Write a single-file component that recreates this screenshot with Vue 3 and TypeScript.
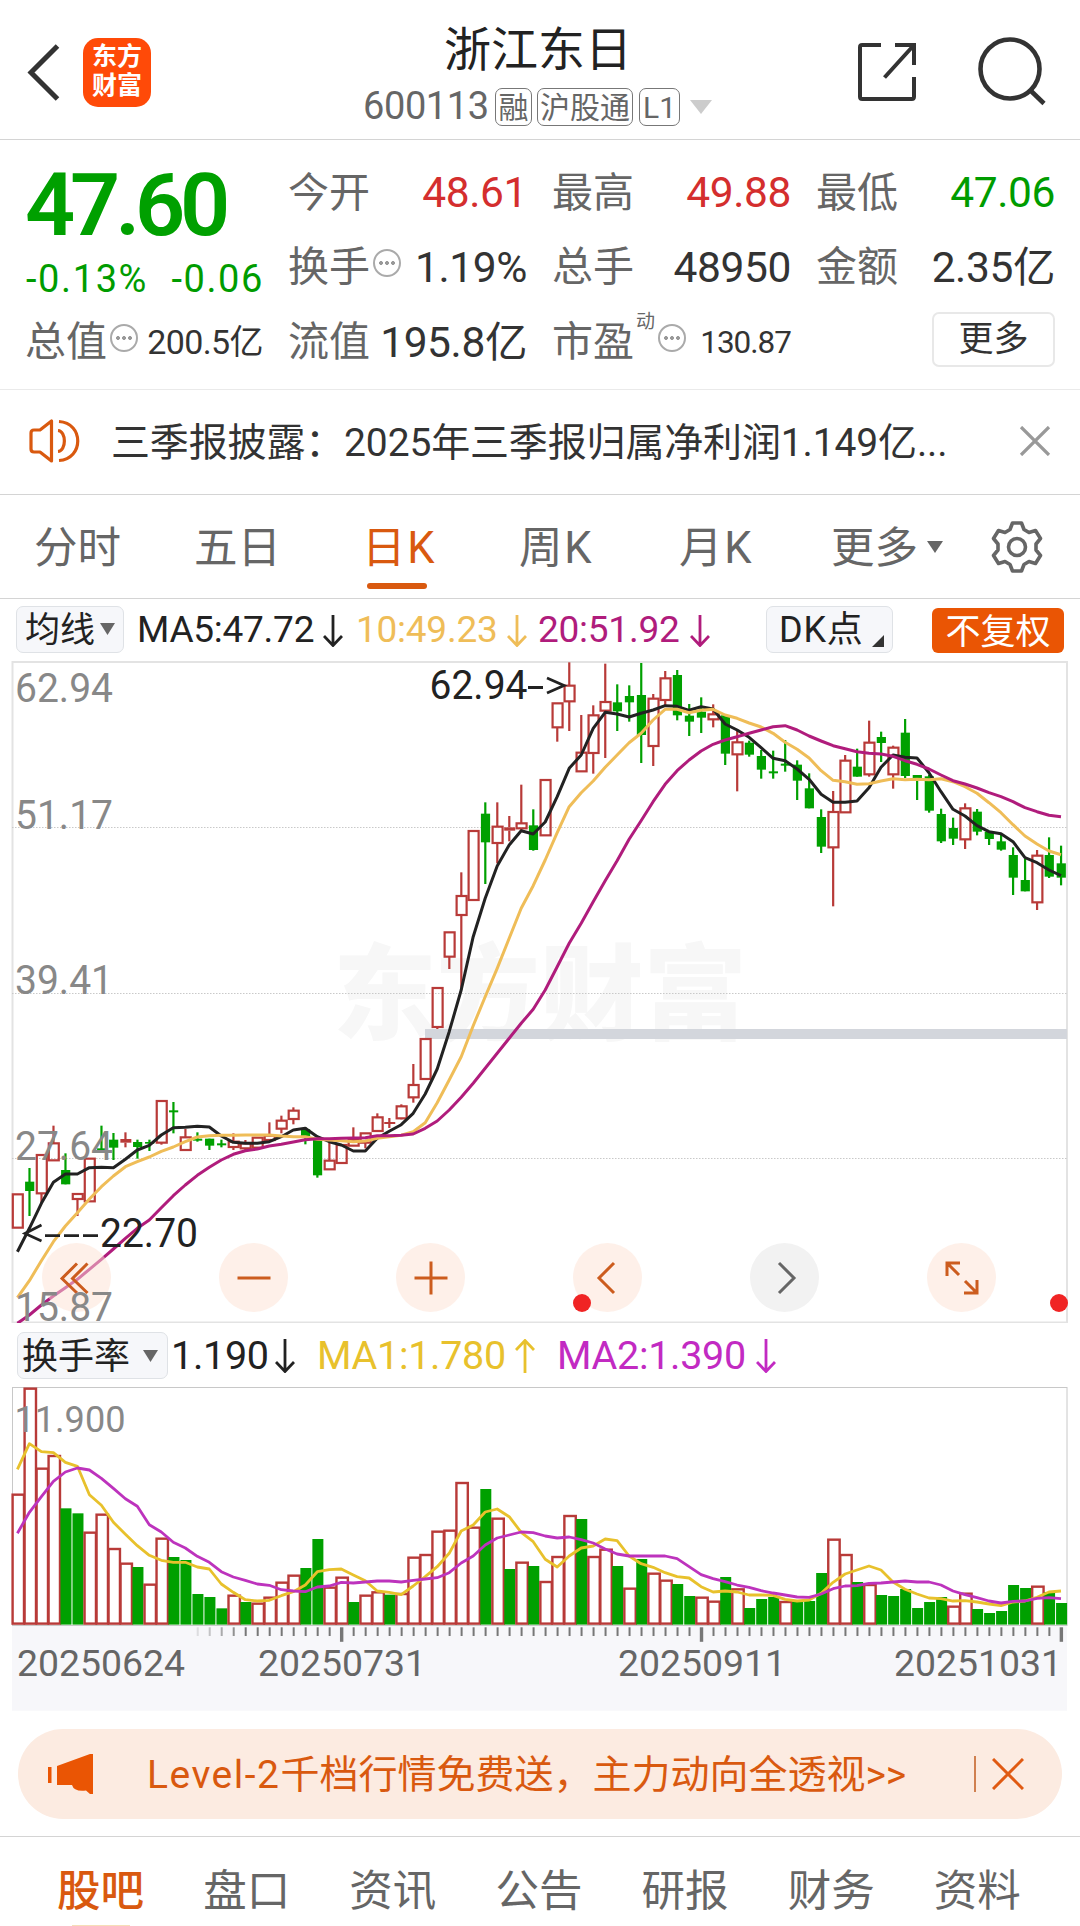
<script setup lang="ts">
type Candle = [kind: 'r' | 'g', top: number, bottom: number, high: number, low: number]

const STEP = 11.995
const X0 = 17.4
const cx = (i: number): number => X0 + i * STEP

// Candles are kept in thirds of a pixel below the pane-specific origin.
const raw: { origin: number; rows: Candle[] }[] = [
  {
    origin: 990,
    rows: [
      ['r', 613, 713, 613, 713], ['g', 575, 603, 534, 678], ['r', 495, 610, 495, 640], ['r', 460, 511, 407, 511],
      ['g', 540, 583, 490, 583], ['r', 612, 627, 612, 678], ['r', 506, 634, 506, 634], ['g', 475, 483, 407, 483],
      ['g', 449, 473, 429, 510], ['r', 447, 458, 427, 472], ['g', 456, 471, 449, 506], ['g', 456, 461, 449, 483],
      ['r', 333, 458, 333, 464], ['g', 361, 367, 336, 430], ['r', 442, 480, 417, 480], ['g', 446, 452, 427, 455],
      ['g', 446, 467, 446, 480], ['g', 460, 466, 449, 472], ['r', 455, 471, 430, 480], ['r', 460, 475, 450, 480],
      ['r', 443, 473, 443, 473], ['r', 437, 450, 397, 450], ['r', 392, 416, 377, 430], ['r', 362, 387, 352, 403],
      ['g', 418, 438, 412, 463], ['g', 450, 556, 445, 563], ['r', 512, 538, 455, 538], ['r', 465, 519, 465, 519],
      ['r', 450, 467, 412, 467], ['r', 430, 458, 430, 475], ['r', 382, 423, 370, 426], ['r', 396, 402, 384, 414],
      ['r', 349, 385, 343, 388], ['r', 285, 322, 222, 338], ['r', 147, 267, 147, 267],
    ],
  },
  {
    origin: 650,
    rows: [
      ['r', 1014, 1131, 1014, 1137], ['r', 847, 920, 847, 957], ['r', 738, 795, 667, 1020], ['r', 543, 750, 543, 750],
      ['g', 491, 577, 457, 702], ['r', 530, 579, 457, 640], ['r', 532, 542, 498, 574], ['r', 520, 535, 404, 540],
      ['g', 526, 600, 478, 602], ['r', 390, 556, 390, 556], ['r', 160, 232, 160, 275], ['r', 107, 154, 37, 243],
      ['r', 308, 364, 195, 366], ['r', 196, 309, 166, 371], ['r', 156, 182, 41, 324], ['g', 157, 184, 103, 243],
      ['g', 138, 157, 106, 215], ['g', 135, 255, 39, 339], ['r', 146, 288, 132, 348], ['r', 85, 150, 63, 165],
      ['g', 75, 196, 60, 211], ['g', 197, 215, 162, 258], ['g', 185, 203, 142, 249], ['r', 193, 208, 163, 232],
      ['g', 196, 311, 196, 345], ['r', 277, 313, 243, 424], ['g', 278, 314, 272, 320], ['g', 318, 359, 300, 386],
      ['g', 364, 370, 302, 386], ['g', 341, 347, 270, 365], ['g', 344, 392, 331, 450], ['g', 415, 475, 370, 475],
      ['g', 501, 590, 478, 609], ['r', 486, 592, 423, 769], ['r', 332, 487, 315, 487], ['g', 350, 380, 296, 380],
      ['r', 278, 373, 212, 380], ['g', 261, 279, 245, 336], ['r', 293, 373, 287, 416], ['g', 248, 378, 207, 384],
      ['g', 375, 384, 375, 450], ['g', 379, 482, 374, 488], ['g', 492, 574, 476, 579], ['g', 534, 566, 503, 585],
      ['r', 475, 568, 460, 597], ['g', 485, 545, 477, 556], ['g', 545, 567, 545, 585], ['g', 574, 599, 555, 602],
      ['g', 615, 683, 592, 735], ['g', 690, 724, 627, 724], ['r', 617, 757, 600, 780], ['g', 615, 680, 562, 684],
      ['g', 640, 683, 587, 706],
    ],
  },
]

const candles = raw
  .flatMap(({ origin, rows }) =>
    rows.map(([kind, t, b, h, l]) => ({
      kind,
      top: origin + t / 3,
      bottom: origin + b / 3,
      high: origin + h / 3,
      low: origin + l / 3,
    })),
  )
  .map((c, i) => ({ ...c, x: cx(i) }))

const points = (ys: number[], start = 0): string[] => ys.map((y, i) => `${cx(start + i).toFixed(1)},${y.toFixed(1)}`)
const line = (lower: number[], upper: number[]): string =>
  [...points(lower.map((v) => 990 + v / 3)), ...points(upper.map((v) => 650 + v / 3), lower.length)].join(' ')

const ma5 = line(
  [785, 715, 640, 577, 552, 552, 533, 532, 533, 508, 480, 466, 435, 413, 412, 409, 411, 438, 457, 460, 460, 455, 440, 420, 415, 440, 455, 465, 483, 483, 445, 424, 404, 370, 312, 237, 125],
  [1020, 860, 745, 648, 585, 542, 552, 516, 440, 355, 315, 235, 187, 192, 201, 190, 180, 167, 169, 181, 170, 177, 222, 240, 262, 293, 325, 332, 357, 388, 433, 457, 457, 453, 413, 352, 315, 322, 324, 368, 425, 478, 498, 527, 545, 551, 575, 623, 638, 660, 677],
)
const ma10 = line(
  [923, 872, 812, 755, 708, 668, 627, 590, 558, 530, 515, 501, 484, 471, 455, 441, 437, 436, 436, 435, 435, 435, 438, 440, 440, 448, 450, 452, 455, 453, 445, 440, 436, 425, 398, 338, 270, 200, 107, 20],
  [955, 865, 775, 707, 630, 548, 470, 428, 393, 352, 315, 278, 250, 210, 178, 178, 188, 181, 178, 195, 205, 219, 231, 250, 277, 298, 324, 362, 391, 395, 403, 401, 393, 386, 389, 388, 389, 386, 395, 410, 430, 458, 488, 524, 558, 582, 603, 614],
)
const ma20 = line(
  [1000, 975, 945, 918, 893, 868, 838, 808, 777, 745, 715, 690, 653, 617, 585, 556, 532, 510, 493, 482, 477, 468, 463, 456, 449, 446, 446, 445, 444, 443, 437, 437, 436, 432, 415, 393, 360, 322, 280, 235, 190, 145, 100, 58],
  [1020, 950, 880, 820, 755, 692, 632, 568, 512, 455, 403, 362, 330, 303, 283, 270, 260, 250, 240, 230, 227, 240, 258, 273, 287, 296, 305, 310, 312, 319, 332, 343, 357, 375, 392, 402, 414, 428, 440, 455, 473, 485, 496, 500],
)

const vy = (v: number): number => 1320 + v / 3
const volumeTops = [
  521, 203, 443, 405, 565, 580, 635, 581, 684, 728, 741, 791, 653, 711, 720, 822, 831, 865, 824, 846, 848, 830, 785, 764, 744, 657, 800, 770, 846, 824, 814, 824, 819, 710, 702, 632, 629, 486, 620, 507, 593, 747, 725, 738,
  783, 708, 585, 597, 708, 686, 738, 803, 717, 758, 779, 792, 828, 830, 842, 771, 805, 864, 837, 831, 843, 846, 843, 759, 656, 702, 786, 792, 825, 828, 807, 864, 846, 831, 857, 818, 867, 879, 873, 795, 804, 797, 816, 849,
]
const volumeKinds = 'rrrrggrrrrgrrgggggrgrrrrggrrgrrgrrrrrrrgrgrgrrrgrrgrgrrggrrgrgggrgggrrgrggggggrrgggggrgg'
const bars = volumeTops.map((v, i) => ({ kind: volumeKinds[i], x: cx(i) + 0.4, y: vy(v) }))
const BASE = 1624.6

const va = points(
  [
    448, 371, 395, 398, 427, 439, 524, 556, 607, 643, 677, 706, 721, 727, 727, 741, 747, 792, 817, 839, 843, 841, 827, 815, 795, 755, 749, 747, 765, 782, 813, 817, 824, 798, 770, 740, 700, 633, 615, 576, 567, 590, 637, 665,
    718, 741, 708, 684, 678, 657, 662, 708, 731, 742, 758, 770, 774, 800, 816, 813, 816, 825, 825, 826, 838, 843, 840, 820, 787, 762, 750, 738, 750, 786, 808, 822, 834, 836, 843, 842, 846, 852, 857, 846, 843, 832, 816, 813,
  ].map(vy),
).join(' ')
const vb = points(
  [
    640, 577, 530, 484, 456, 444, 450, 475, 505, 536, 559, 614, 636, 667, 684, 709, 727, 755, 771, 781, 792, 796, 809, 813, 815, 801, 798, 787, 789, 786, 783, 783, 786, 781, 777, 773, 758, 729, 708, 675, 654, 645, 636, 638,
    648, 654, 651, 659, 669, 687, 702, 708, 708, 708, 708, 716, 740, 764, 776, 785, 795, 802, 812, 819, 825, 831, 832, 822, 806, 798, 797, 790, 789, 786, 783, 786, 786, 795, 813, 824, 833, 843, 849, 844, 843, 835, 833, 836,
  ].map(vy),
).join(' ')

const ticks = Array.from({ length: 73 }, (_, k) => k + 15).map((i) => ({
  x: cx(i) + 0.4,
  major: i === 27 || i === 57 || i === 87,
  fade: i < 19 ? (i - 14) / 5 : 1,
}))
const dates = [
  { t: '20250624', x: 17, w: 168 },
  { t: '20250731', x: 258, w: 168 },
  { t: '20250911', x: 618, w: 168 },
  { t: '20251031', x: 894, w: 168 },
]
const priceLabels = [
  { t: '62.94', y: 701.5 },
  { t: '51.17', y: 829.3 },
  { t: '39.41', y: 994.3 },
  { t: '27.64', y: 1159.8 },
  { t: '15.87', y: 1321 },
]
const periods = [
  { t: '分时', w: 87, l: 34 },
  { t: '五日', w: 87, l: 73 },
  { t: '日K', w: 71, l: 81 },
  { t: '周K', w: 74, l: 86 },
  { t: '月K', w: 74, l: 86 },
  { t: '更多', w: 87, l: 78 },
]
const footTabs = ['股吧', '盘口', '资讯', '公告', '研报', '财务', '资料']
</script>

<template>
  <div class="page">
    <header class="top">
      <svg class="back" width="34" height="58" viewBox="0 0 34 58"><path d="M31.500 3 5 29.500 31.500 56" fill="none" stroke="#333" stroke-width="5" /></svg>
      <div class="logo"><span>东方</span><span>财富</span></div>
      <div class="heading">
        <h1>浙江东日</h1>
        <div class="code">
          <span class="num">600113</span>
          <span class="tag t1">融</span><span class="tag t2">沪股通</span><span class="tag t3">L1</span>
          <svg width="22" height="14" viewBox="0 0 22 14"><path d="M0 0H22L11 14Z" fill="#ccc" /></svg>
        </div>
      </div>
      <svg class="share" width="60" height="60" viewBox="0 0 60 60" fill="none" stroke="#333" stroke-width="4">
        <path d="M24 3H5.200Q3 3 3 5.200V54.800Q3 57 5.200 57H54.800Q57 57 57 54.800V35M38 3H57V23M57 3 27.500 35.500" />
      </svg>
      <svg class="search" width="70" height="70" viewBox="0 0 70 70" fill="none" stroke="#333" stroke-width="4.600">
        <circle cx="33" cy="33" r="29.500" /><path d="M53 54 67 67.500" />
      </svg>
    </header>

    <section class="quote">
      <div class="price">47.60</div>
      <div class="cell first"><label>今开</label><b class="red">48.61</b></div>
      <div class="cell first"><label>最高</label><b class="red">49.88</b></div>
      <div class="cell first"><label>最低</label><b class="green">47.06</b></div>
      <div class="change"><span>-0.13%</span><span>-0.06</span></div>
      <div class="cell"><label>换手</label><i class="dots"></i><b>1.19%</b></div>
      <div class="cell"><label>总手</label><b>48950</b></div>
      <div class="cell"><label>金额</label><b>2.35亿</b></div>
      <div class="cell"><label>总值</label><i class="dots"></i><b class="mid">200.5亿</b></div>
      <div class="cell"><label>流值</label><b>195.8亿</b></div>
      <div class="cell"><label>市盈</label><sup>动</sup><i class="dots"></i><b class="small">130.87</b></div>
      <div class="cell last"><button class="more">更多</button></div>
    </section>

    <section class="notice">
      <svg width="52" height="46" viewBox="0 0 52 46" fill="none" stroke="#d9590f" stroke-width="3.200" stroke-linejoin="round">
        <path d="M22.500 3V43L11 34H5Q2 34 2 31V15Q2 12 5 12H11Z" />
        <path d="M29 12.500C37.500 13 37.500 33 29 33.500M30 3.500C55 5 55 41 30 42.500" />
      </svg>
      <p>三季报披露：2025年三季报归属净利润1.149亿...</p>
      <svg width="32" height="30" viewBox="0 0 32 30"><path d="M2 1 30 29M30 1 2 29" stroke="#999" stroke-width="3.200" /></svg>
    </section>

    <nav class="periods">
      <span v-for="p in periods" :key="p.t" :class="{ on: p.t === '日K', k: p.t.endsWith('K') }" :style="{ width: p.w + 'px', marginLeft: p.l + 'px' }">{{ p.t }}</span>
      <svg class="caret" width="16" height="12" viewBox="0 0 16 12"><path d="M0 0H16L8 12Z" fill="#666" /></svg>
      <svg class="gear" width="56" height="56" viewBox="-28 -28 56 56" fill="none" stroke="#666" stroke-width="3.600" stroke-linejoin="round">
        <path d="M-4.500 -24H4.500L7 -17.500 12 -14.500 18.500 -16.500 23.500 -8.500 19 -3V3L23.500 8.500 18.500 16.500 12 14.500 7 17.500 4.500 24H-4.500L-7 17.500 -12 14.500 -18.500 16.500 -23.500 8.500 -19 3V-3L-23.500 -8.500 -18.500 -16.500 -12 -14.500 -7 -17.500Z" />
        <circle r="8.500" />
      </svg>
    </nav>

    <section class="averages">
      <button class="chip ma">均线<svg width="15" height="12" viewBox="0 0 15 12"><path d="M0 0H15L7.500 12Z" fill="#666" /></svg></button>
      <span class="k5">MA5:47.72</span><svg class="arr a1" viewBox="0 0 20 32"><path d="M10 0V30M1 21 10 30.500 19 21" /></svg>
      <span class="k10">10:49.23</span><svg class="arr a2" viewBox="0 0 20 32"><path d="M10 0V30M1 21 10 30.500 19 21" /></svg>
      <span class="k20">20:51.92</span><svg class="arr a3" viewBox="0 0 20 32"><path d="M10 0V30M1 21 10 30.500 19 21" /></svg>
      <button class="chip dk">DK点<svg width="12" height="12" viewBox="0 0 12 12"><path d="M12 0V12H0Z" fill="#333" /></svg></button>
      <button class="adjust">不复权</button>
    </section>

    <section class="kline">
      <svg class="plot" width="1080" height="664" viewBox="0 659 1080 664">
        <rect x="12.500" y="662" width="1054.500" height="660.500" fill="none" stroke="#e3e3e3" stroke-width="2" />
        <text class="mark" x="333" y="1032" textLength="414" lengthAdjust="spacingAndGlyphs">东方财富</text>
        <g stroke="#c9c9c9" stroke-width="1" stroke-dasharray="1.500 1.500">
          <path d="M12 827.500H1067M12 993.500H1067M12 1158.500H1067" />
        </g>
        <rect x="425" y="1029" width="642" height="10" fill="#d3d6dc" />
        <g v-for="(c, i) in candles" :key="i">
          <template v-if="c.kind === 'g'">
            <rect :x="c.x - 1" :y="c.high" width="2.200" :height="c.low - c.high" fill="#00a000" />
            <rect :x="c.x - 4.300" :y="c.top" width="9.200" :height="c.bottom - c.top" fill="#00a000" />
          </template>
          <template v-else>
            <rect :x="c.x - 1" :y="c.high" width="2.200" :height="Math.max(0, c.top - c.high)" fill="#b83a38" />
            <rect :x="c.x - 1" :y="c.bottom" width="2.200" :height="Math.max(0, c.low - c.bottom)" fill="#b83a38" />
            <rect v-if="c.bottom - c.top < 4" :x="c.x - 5" :y="c.top" width="11" :height="c.bottom - c.top" fill="#b83a38" />
            <rect v-else :x="c.x - 4.600" :y="c.top" width="10" :height="c.bottom - c.top" fill="none" stroke="#b83a38" stroke-width="2.200" />
          </template>
        </g>
        <g fill="none" stroke-width="3" stroke-linejoin="round">
          <polyline :points="ma5" stroke="#222" />
          <polyline :points="ma10" stroke="#efbd58" />
          <polyline :points="ma20" stroke="#b01c7c" />
        </g>
        <text class="peak" x="429.500" y="699.300" textLength="98" lengthAdjust="spacingAndGlyphs">62.94</text>
        <text class="peak" x="100" y="1247" textLength="98" lengthAdjust="spacingAndGlyphs">22.70</text>
        <g fill="none" stroke="#222" stroke-width="2.800">
          <path d="M528 687.500H543M547 678 564 685.500 547 693" />
          <path d="M41.500 1225 25 1233.500 41.500 1241M45 1235.700H60M64 1235.700H79M83 1235.700H98" />
        </g>
      </svg>
      <div class="tools">
        <button><svg viewBox="-30 -30 60 60"><path d="M0 -14.500 -15 .500 0 15M10.500 -14.500 -4.500 .500 10.500 15" /></svg></button>
        <button><svg viewBox="-30 -30 60 60"><path d="M-16.500 0H16.500" /></svg></button>
        <button><svg viewBox="-30 -30 60 60"><path d="M-16.500 0H16.500M0 -16.500V16.500" /></svg></button>
        <button><svg viewBox="-30 -30 60 60"><path d="M6 -15 -9 0 6 15" /></svg><em></em></button>
        <button class="off"><svg viewBox="-30 -30 60 60"><path d="M-6 -15 9 0 -6 15" /></svg></button>
        <button><svg viewBox="-30 -30 60 60"><path d="M-2 -15H-15V-2M-14 -14 -3 -3M2 15H15V2M14 14 3 3" /></svg></button>
      </div>
      <svg class="labels" width="130" height="680" viewBox="0 659 130 680">
        <text v-for="l in priceLabels" :key="l.t" class="scale" x="15" :y="l.y" textLength="98" lengthAdjust="spacingAndGlyphs">{{ l.t }}</text>
      </svg>
      <em class="edge"></em>
    </section>

    <section class="turnover">
      <button class="chip hs">换手率<svg width="15" height="12" viewBox="0 0 15 12"><path d="M0 0H15L7.500 12Z" fill="#666" /></svg></button>
      <span class="v0">1.190</span><svg class="arr b1" viewBox="0 0 20 34"><path d="M10 0V32M1 23 10 32.500 19 23" /></svg>
      <span class="v1">MA1:1.780</span><svg class="arr b2" viewBox="0 0 20 34"><path d="M10 34V2M1 11 10 1.500 19 11" /></svg>
      <span class="v2">MA2:1.390</span><svg class="arr b3" viewBox="0 0 20 34"><path d="M10 0V32M1 23 10 32.500 19 23" /></svg>
    </section>

    <svg class="volume" width="1080" height="327" viewBox="0 1384 1080 327">
      <rect x="12" y="1626" width="1055" height="84.700" fill="#f7f7fa" />
      <rect x="12.500" y="1387.500" width="1054.500" height="238" fill="none" stroke="#c8c8c8" stroke-width="1" />
      <g v-for="(b, i) in bars" :key="i">
        <rect v-if="b.kind === 'g'" :x="b.x - 5.300" :y="b.y" width="11" :height="BASE - b.y" fill="#00a000" />
        <rect v-else :x="b.x - 5.200" :y="b.y + 1" width="11.400" :height="BASE - b.y - 2" fill="#fff" stroke="#b83a38" stroke-width="2.400" />
      </g>
      <g fill="none" stroke-width="2.800" stroke-linejoin="round">
        <polyline :points="va" stroke="#e8c12c" />
        <polyline :points="vb" stroke="#bd33bd" />
      </g>
      <text class="scale vmax" x="14.500" y="1432" textLength="111" lengthAdjust="spacingAndGlyphs">11.900</text>
      <rect v-for="t in ticks" :key="t.x" :x="t.x - (t.major ? 1.700 : 1)" y="1627.300" :width="t.major ? 3.400 : 2" :height="t.major ? 14.500 : 8.700" fill="#777" :opacity="t.fade" />
      <text v-for="d in dates" :key="d.t" class="date" :x="d.x" y="1676" :textLength="d.w" lengthAdjust="spacingAndGlyphs">{{ d.t }}</text>
    </svg>

    <section class="banner">
      <svg width="46" height="40" viewBox="0 0 46 40" fill="#ea5504"><path d="M0 13H3.500V29H0ZM9 12 42 0H45V40H42L38 36.500Q26 38 24 31H9Z" /></svg>
      <p><span>Level-2</span>千档行情免费送，主力动向全透视&gt;&gt;</p>
      <i></i>
      <svg width="32" height="32" viewBox="0 0 32 32"><path d="M1 1 31 31M31 1 1 31" stroke="#e05a12" stroke-width="3" /></svg>
    </section>

    <nav class="foot">
      <span v-for="(t, i) in footTabs" :key="t" :class="{ on: i === 0 }">{{ t }}</span>
    </nav>
  </div>
</template>

<style>
body {
  background: #fff;
}
</style>

<style scoped>
.page {
  width: 1080px;
  height: 1926px;
  overflow: hidden;
  display: flex;
  flex-direction: column;
  background: #fff;
  color: #333;
  font-family: Roboto, 'Noto Sans CJK SC', sans-serif;
  line-height: 1.2;
  white-space: nowrap;
}
.page > * {
  flex: none;
  box-sizing: border-box;
}
svg {
  display: block;
  flex: none;
}
button {
  box-sizing: border-box;
  font: inherit;
  padding: 0;
  margin: 0;
  color: inherit;
}
.top {
  height: 140px;
  border-bottom: 1px solid #d4d4d4;
  display: flex;
  align-items: flex-start;
}
.back {
  margin: 43px 0 0 26px;
}
.logo {
  margin: 38px 0 0 23px;
  padding-bottom: 3px;
  box-sizing: border-box;
  width: 68px;
  height: 69px;
  border-radius: 15px;
  background: #ff4a08;
  color: #fff;
  font-size: 25px;
  font-weight: 700;
  line-height: 29px;
  display: flex;
  flex-direction: column;
  align-items: center;
  justify-content: center;
}
.heading {
  width: 360px;
  margin-left: 207px;
}
h1 {
  margin: 22px 0 0;
  font-size: 47px;
  line-height: 56px;
  font-weight: 400;
  color: #222;
  text-align: center;
}
.code {
  margin: 10px 0 0 5px;
  height: 38px;
  display: flex;
  align-items: center;
  color: #666;
}
.code .num {
  width: 132px;
  font-size: 38px;
  letter-spacing: -0.4px;
}
.tag {
  box-sizing: border-box;
  height: 38px;
  border: 1.500px solid #777;
  border-radius: 7px;
  font-size: 30px;
  line-height: 37px;
  text-align: center;
}
.t1 {
  width: 37px;
  margin-right: 5px;
}
.t2 {
  width: 96px;
  margin-right: 6px;
}
.t3 {
  width: 41px;
  margin-right: 10px;
}
.share {
  margin: 42px 0 0 139px;
}
.search {
  margin: 36px 0 0 60px;
}
.quote {
  height: 250px;
  padding: 15px 0 0 26px;
  border-bottom: 1px solid #eaeaea;
  display: grid;
  grid-template-columns: 237px 238px 238px 238px;
  grid-auto-rows: 75px;
  column-gap: 26px;
}
.cell {
  display: flex;
  align-items: center;
}
.cell label {
  margin-left: -1px;
  font-size: 41px;
  color: #666;
}
.first label {
  margin-top: 2px;
}
.cell b {
  margin-left: auto;
  font-weight: 400;
  font-size: 42.500px;
  letter-spacing: -0.4px;
  color: #333;
}
.cell b.mid {
  font-size: 34px;
  letter-spacing: -0.6px;
}
.cell b.small {
  font-size: 31.500px;
  letter-spacing: -1px;
}
.cell .red {
  color: #d42e2e;
}
.cell .green,
.change {
  color: #009c00;
}
.price {
  font-size: 88px;
  font-weight: 600;
  line-height: 100px;
  letter-spacing: -5.200px;
  margin-left: -1px;
  color: #00a000;
}
.change {
  font-size: 38px;
  display: flex;
  justify-content: space-between;
  align-items: center;
  padding-top: 25px;
  letter-spacing: 1.600px;
}
.change span:last-child {
  margin-right: -1px;
}
.cell sup {
  font-size: 19px;
  line-height: 20px;
  color: #666;
  margin: -42px 0 0 2px;
}
.dots {
  width: 24px;
  height: 24px;
  margin: -9px 0 0 3px;
  border: 2.500px solid #aaa;
  border-radius: 50%;
  background:
    radial-gradient(circle at 6px 12px, #999 1.700px, transparent 2.200px),
    radial-gradient(circle at 12px 12px, #999 1.700px, transparent 2.200px),
    radial-gradient(circle at 18px 12px, #999 1.700px, transparent 2.200px);
}
.more {
  margin: -6px 0 0 115px;
  width: 124px;
  height: 55px;
  border: 2px solid #e8e8e8;
  border-radius: 7px;
  background: #fff;
  font-size: 35px;
  line-height: 51px;
}
.notice {
  height: 105px;
  border-bottom: 1px solid #d4d4d4;
  display: flex;
  align-items: center;
  padding-left: 29px;
}
.notice p {
  margin: 2px 0 0 30px;
  width: 908px;
  font-size: 39px;
  letter-spacing: -0.150px;
}
.notice svg {
  margin-bottom: 2px;
}
.periods {
  height: 104px;
  border-bottom: 1px solid #d4d4d4;
  display: flex;
  align-items: center;
  font-size: 43.500px;
  color: #666;
}
.periods span {
  position: relative;
  margin-top: 5px;
  line-height: 60px;
}
.periods .k {
  letter-spacing: 1.800px;
}
.periods .on {
  color: #d9590f;
}
.periods .on::after {
  content: '';
  position: absolute;
  left: 5px;
  bottom: -10px;
  width: 60px;
  height: 6px;
  border-radius: 3px;
  background: #d9590f;
}
.caret {
  margin-left: 9px;
}
.gear {
  margin-left: 46px;
}
.averages {
  height: 60px;
  display: flex;
  align-items: center;
  padding-left: 16px;
  font-size: 37px;
}
.averages > span {
  padding-top: 3px;
  letter-spacing: -0.250px;
}
.averages > .arr {
  margin-top: 3px;
}
.chip {
  height: 47px;
  border: 1.500px solid #dfe2e6;
  border-radius: 7px;
  background: #f6f7fa;
  color: #222;
  display: flex;
  align-items: center;
  padding-top: 4px;
}
.chip svg {
  margin-top: -4px;
}
.ma {
  width: 108px;
  padding-left: 8px;
  font-size: 35px;
  gap: 5px;
}
.arr {
  width: 20px;
  height: 32px;
  fill: none;
  stroke-width: 2.800;
}
.k5 {
  width: 186px;
  margin-left: 13px;
  color: #222;
}
.k10 {
  width: 151px;
  margin-left: 13px;
  color: #efbd58;
}
.k20 {
  width: 152px;
  margin-left: 11px;
  color: #b01c7c;
}
.a1 {
  stroke: #222;
}
.a2 {
  stroke: #efbd58;
}
.a3 {
  stroke: #b01c7c;
}
.dk {
  width: 127px;
  margin-left: 56px;
  padding-left: 12px;
  font-size: 36px;
  letter-spacing: 0.800px;
}
.dk svg {
  margin: 20px 0 0 8px;
}
.adjust {
  width: 132px;
  height: 45px;
  margin-left: 39px;
  margin-top: 2px;
  border: 0;
  border-radius: 6px;
  background: #ea5504;
  color: #fff;
  font-size: 35px;
  line-height: 49px;
}
.kline {
  position: relative;
  height: 664px;
}
.labels {
  position: absolute;
  left: 0;
  top: 0;
}
.mark {
  font: 900 104px 'Noto Sans CJK SC', sans-serif;
  fill: #f7f7f7;
}
.scale {
  font-size: 40px;
  fill: #888;
}
.vmax {
  font-size: 37px;
}
.peak {
  font-size: 40.500px;
  fill: #222;
}
.date {
  font-size: 37px;
  fill: #666;
}
.tools {
  position: absolute;
  left: 42px;
  top: 584px;
  width: 954px;
  display: flex;
  justify-content: space-between;
}
.tools button {
  position: relative;
  width: 69px;
  height: 69px;
  border: 0;
  border-radius: 50%;
  background: rgba(253, 225, 211, 0.5);
}
.tools svg {
  width: 60px;
  height: 60px;
  margin: 0 auto;
  fill: none;
  stroke: #cc5c1e;
  stroke-width: 3;
}
.tools .off {
  background: #f2f2f2;
}
.tools .off svg {
  stroke: #666;
}
em {
  position: absolute;
  width: 18px;
  height: 18px;
  border-radius: 50%;
  background: #f02424;
}
.tools em {
  left: 0;
  bottom: 0;
}
.edge {
  left: 1050px;
  top: 635px;
}
.turnover {
  height: 61px;
  padding: 4px 0 0 17px;
  display: flex;
  align-items: center;
  font-size: 39.500px;
}
.turnover > span {
  letter-spacing: -0.300px;
}
.hs {
  width: 151px;
  height: 47px;
  padding-left: 4px;
  font-size: 36px;
  gap: 13px;
}
.turnover .arr {
  height: 34px;
}
.v0 {
  width: 104px;
  margin-left: 3px;
  color: #222;
}
.v1 {
  width: 198px;
  margin-left: 22px;
  color: #e8c12c;
}
.v2 {
  width: 199px;
  margin-left: 22px;
  color: #c22ac2;
}
.b1 {
  stroke: #222;
}
.b2 {
  stroke: #e8c12c;
}
.b3 {
  stroke: #c22ac2;
}
.banner {
  margin: 18px 18px 0;
  height: 90px;
  border-radius: 45px;
  background: #fcebe1;
  display: flex;
  align-items: center;
  padding-left: 30px;
  color: #d9590f;
  font-size: 39px;
}
.banner p {
  margin: 0 0 0 53px;
  padding-top: 3px;
  width: 827px;
}
.banner p span {
  letter-spacing: 1.500px;
}
.banner i {
  width: 1.500px;
  height: 36px;
  background: #d08050;
  margin-right: 16px;
}
.foot {
  margin-top: 17px;
  border-top: 1px solid #d4d4d4;
  height: 92px;
  display: flex;
  padding-left: 57px;
  font-size: 43.500px;
  line-height: 60px;
  color: #666;
}
.foot span {
  width: 146.200px;
  padding-top: 25px;
  position: relative;
}
.foot .on {
  color: #d9590f;
  font-weight: 500;
}
.foot .on::after {
  content: '';
  position: absolute;
  left: 15px;
  top: 88px;
  width: 58px;
  height: 3px;
  background: #f6dfb8;
}
</style>
